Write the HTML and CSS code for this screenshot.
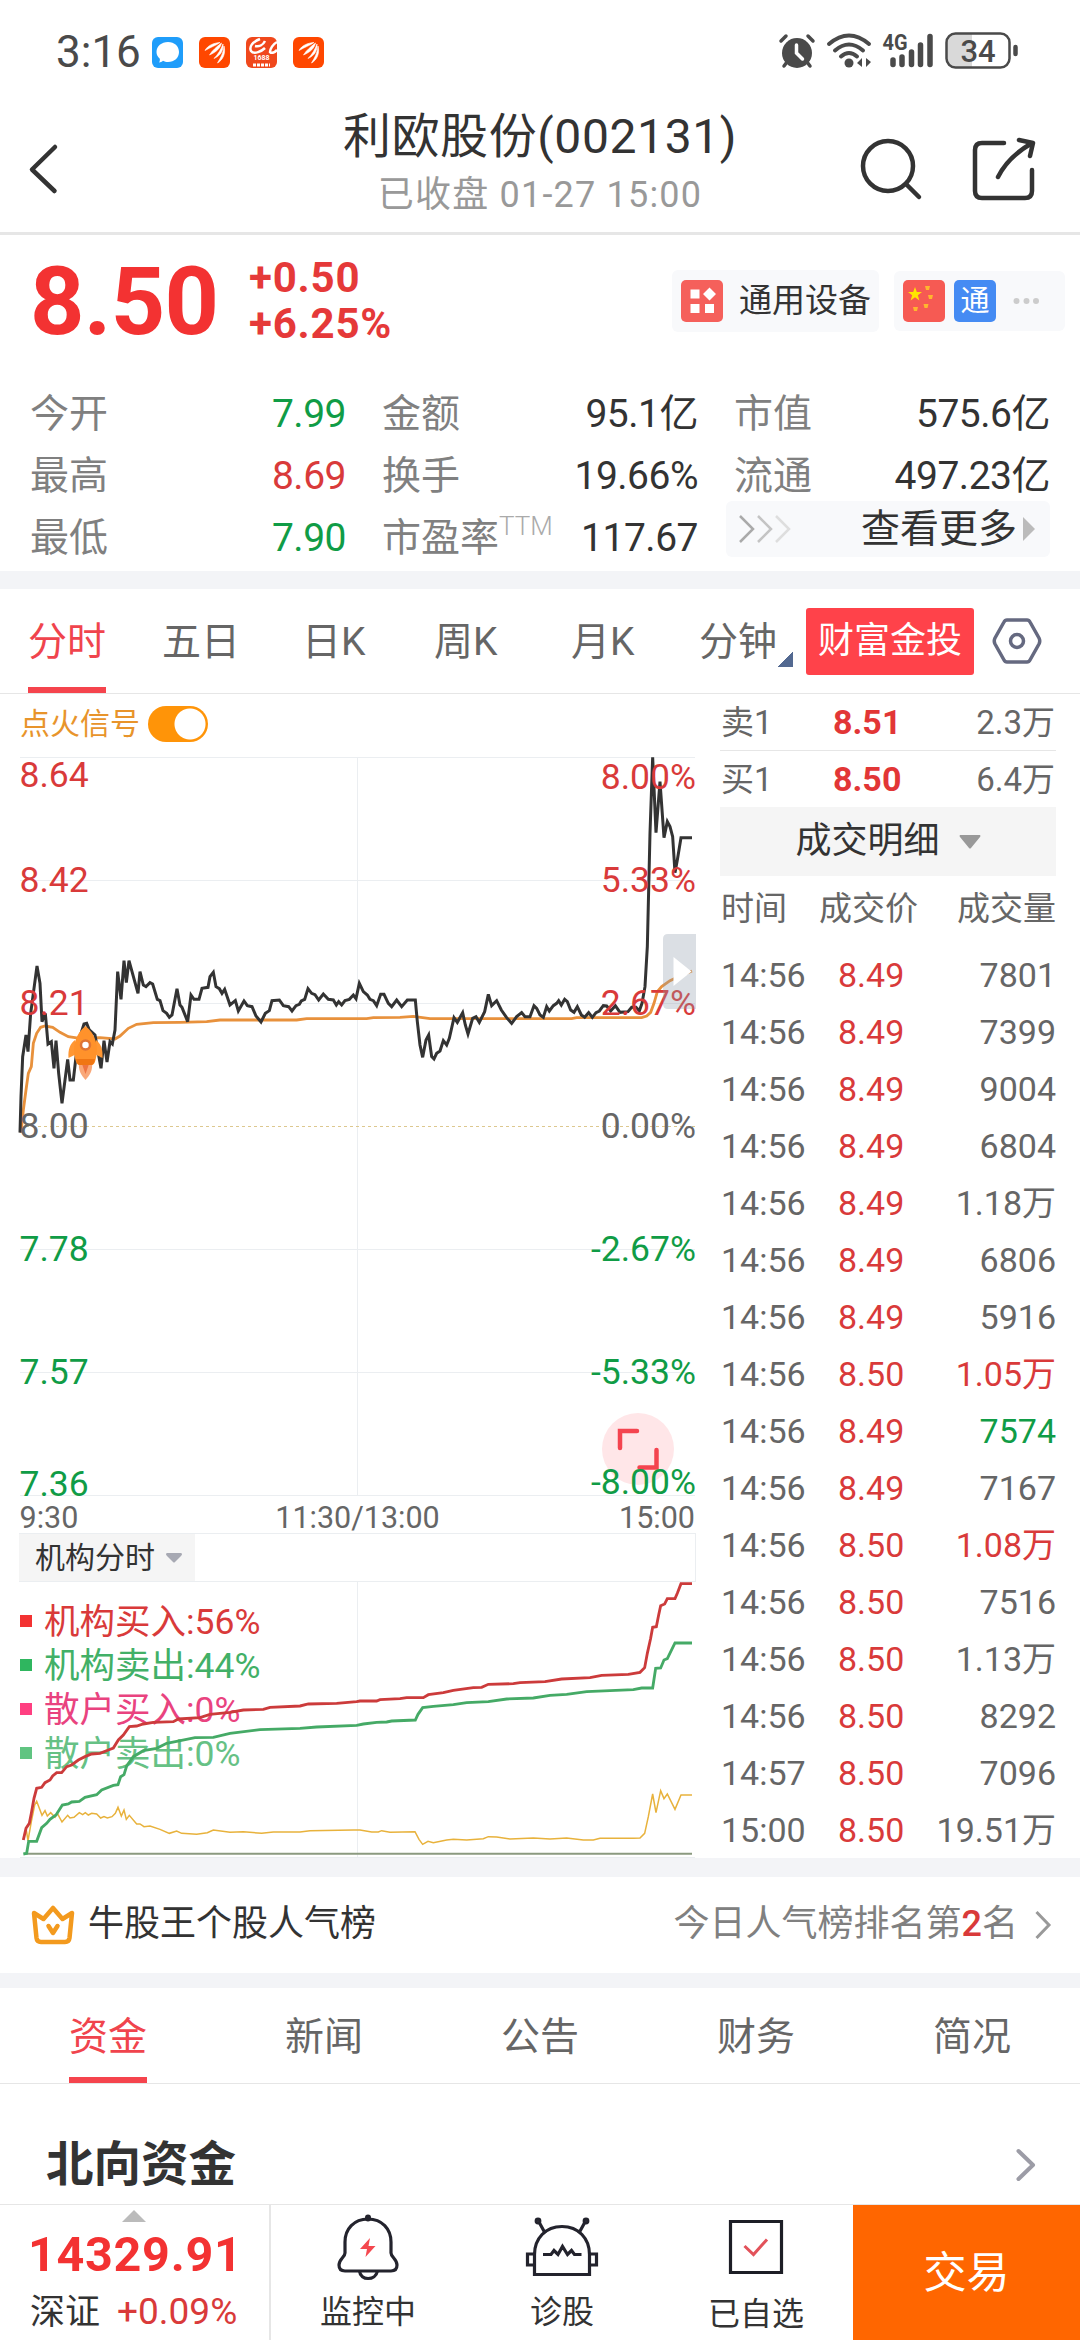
FILE: index.html
```html
<!DOCTYPE html>
<html lang="zh-CN">
<head>
    <meta charset="UTF-8">
    <meta name="viewport" content="width=device-width, initial-scale=1.0">
    <title>利欧股份(002131)</title>
    <link rel="stylesheet" href="styles.css">
</head>
<body>
    <!-- Status bar -->
    <div class="status-bar">
        <span class="clock">3:16</span>
        <div class="app-icons">
            <svg width="31" height="31" viewBox="0 0 31 31">
                <rect width="31" height="31" rx="6" fill="#1f9dfa"/>
                <path d="M16 5c6.500 0 11 4.300 11 10s-4.500 10-11 10c-2 0-3.500-.4-5-1.200-1.200 1-2.500 1.600-4 1.700.8-1 1-2.300.8-3.800C5.800 20 4.500 17.600 4.500 15c0-5.700 5-10 11.500-10z" fill="#fff"/>
            </svg>
            <svg width="31" height="31" viewBox="0 0 31 31">
                <rect width="31" height="31" rx="6" fill="#ff4700"/>
                <path d="M6 13.500C9 8 15 6 21 5.500c-4 3-9 4.500-15 8zM10.500 18c3-5 7-8 12-12-1 5-5 9-12 12zM15 21.500c4-4 7-9 9-14.500.5 6-2 11.500-9 14.500zM18.500 26c3-5 6-10 6.500-17 2 7-1 14-6.500 17z" fill="#fff" stroke="#fff" stroke-width=".6"/>
            </svg>
            <svg width="31" height="31" viewBox="0 0 31 31">
                <rect width="31" height="31" rx="6" fill="#f0481c"/>
                <path d="M14 2C6 5 3 10 5 14c3 4 11 0 14-3M9 9c4 1 8-1 10-5M31 5c-4 2-7 7-7 10 2 2 5 0 7-2" fill="none" stroke="#fff" stroke-width="2.500"/>
                <text x="15.500" y="23" class="app-no">1688</text>
                <path d="M7 28h17" stroke="#fff" stroke-width="3" stroke-dasharray="3 1"/>
            </svg>
            <svg width="31" height="31" viewBox="0 0 31 31">
                <rect width="31" height="31" rx="6" fill="#ff4700"/>
                <path d="M6 13.500C9 8 15 6 21 5.500c-4 3-9 4.500-15 8zM10.500 18c3-5 7-8 12-12-1 5-5 9-12 12zM15 21.500c4-4 7-9 9-14.500.5 6-2 11.500-9 14.500zM18.500 26c3-5 6-10 6.500-17 2 7-1 14-6.500 17z" fill="#fff" stroke="#fff" stroke-width=".6"/>
            </svg>
        </div>
        <svg class="system-icons" width="245" height="40" viewBox="775 30 245 40">
            <!-- alarm -->
            <g stroke="#4a4a4a" stroke-width="3.500" stroke-linecap="round" fill="none">
                <path d="M781 41l5-5M808 36l5 5M787 62l-3 4M807 62l3 4"/>
                <circle cx="797" cy="53" r="15" fill="#4a4a4a" stroke="none"/>
                <path d="M796.500 45v8l6 6" stroke="#fff"/>
            </g>
            <!-- wifi -->
            <g stroke="#4a4a4a" stroke-width="4" stroke-linecap="round" fill="none">
                <path d="M829 44q20-17 40 0M835 50.500q14-12 28 0M841 56.500q8-7 16 0"/>
                <circle cx="849" cy="63" r="4.500" fill="#4a4a4a" stroke="none"/>
                <path d="M857 63l5-5v9zM871 62l-5 5v-9z" fill="#4a4a4a" stroke="none"/>
            </g>
            <!-- signal -->
            <text x="882.500" y="50" class="net-type" textLength="25" lengthAdjust="spacingAndGlyphs">4G</text>
            <path d="M893 60v4.500M902 57v7.500M911.500 52v12.500M920.500 45v19.500M930 36.500v28" stroke="#4a4a4a" stroke-width="5.500" stroke-linecap="round"/>
            <!-- battery -->
            <path d="M956 34h16v33h-16q-9 0-9-9V43q0-9 9-9z" fill="#d9d9d9"/>
            <rect x="946.500" y="33.500" width="63" height="34" rx="9" fill="none" stroke="#4a4a4a" stroke-width="2.500"/>
            <path d="M1015.500 47v7" stroke="#4a4a4a" stroke-width="4.500" stroke-linecap="round"/>
            <text x="978" y="61.500" class="battery">34</text>
        </svg>
    </div>

    <!-- Title bar -->
    <div class="header">
        <svg class="back" width="34" height="54" viewBox="0 0 34 54">
            <path d="M27 5L4 27.500 26.500 49" fill="none" stroke="#333" stroke-width="4.500" stroke-linecap="round" stroke-linejoin="round"/>
        </svg>
        <div class="header-title">
            <div class="name">利欧股份(002131)</div>
            <div class="state">已收盘 01-27 15:00</div>
        </div>
        <svg class="actions" width="180" height="66" viewBox="858 136 180 66">
            <g fill="none" stroke="#333" stroke-width="4.500" stroke-linecap="round" stroke-linejoin="round">
                <circle cx="888" cy="166" r="25"/>
                <path d="M906 184l13 13"/>
                <path d="M1004 143h-22q-7 0-7 7v41q0 7 7 7h43q7 0 7-7v-21"/>
                <path d="M998 177q10-20 34-34M1019 140l14 3-3 13"/>
            </g>
        </svg>
    </div>

    <!-- Quote -->
    <div class="quote">
        <div class="quote-top">
            <div class="price">8.50</div>
            <div class="change">
                <div>+0.50</div>
                <div>+6.25%</div>
            </div>
            <div class="tag industry">
                <svg width="42" height="42" viewBox="0 0 42 42">
                    <rect width="42" height="42" rx="5" fill="#f5605b"/>
                    <path d="M9.500 9.500h9v9h-9zM9.500 24h9v9h-9zM24 24h9v9h-9zM28.500 7.500l6.500 6.500-6.500 6.500L22 14z" fill="#fff"/>
                </svg>
                <span>通用设备</span>
            </div>
            <div class="tag labels">
                <svg width="42" height="42" viewBox="0 0 42 42">
                    <rect width="42" height="42" rx="5" fill="#f65a53"/>
                    <path d="M12 7l1.800 5h5.200l-4.200 3.200 1.600 5.300-4.400-3.200-4.400 3.200 1.600-5.300L5 12h5.200z" fill="#ffe600"/>
                    <path d="M22 6h5l-1 4h-3zM25 15h5l-1 4h-3zM20.500 24h5l-1 4h-3zM10 27h5l-1 4h-3z" fill="#ffb62e"/>
                </svg>
                <span class="tong">通</span>
                <svg width="26" height="8" viewBox="0 0 26 8" fill="#ccc">
                    <circle cx="3.500" cy="4" r="3"/><circle cx="13.500" cy="4" r="3"/><circle cx="23" cy="4" r="3"/>
                </svg>
            </div>
        </div>
        <div class="stats">
            <div class="stat-col">
                <div class="stat"><span>今开</span><b class="green">7.99</b></div>
                <div class="stat"><span>最高</span><b class="red">8.69</b></div>
                <div class="stat"><span>最低</span><b class="green">7.90</b></div>
            </div>
            <div class="stat-col">
                <div class="stat"><span>金额</span><b>95.1亿</b></div>
                <div class="stat"><span>换手</span><b>19.66%</b></div>
                <div class="stat"><span>市盈率<sup>TTM</sup></span><b>117.67</b></div>
            </div>
            <div class="stat-col">
                <div class="stat"><span>市值</span><b>575.6亿</b></div>
                <div class="stat"><span>流通</span><b>497.23亿</b></div>
                <div class="more">
                    <svg width="54" height="28" viewBox="0 0 54 28" fill="none" stroke-width="2.500">
                        <path d="M2 1l13 13L2 27" stroke="#aaa"/>
                        <path d="M20 1l13 13-13 13" stroke="#c4c4c4"/>
                        <path d="M38 1l13 13-13 13" stroke="#dedede"/>
                    </svg>
                    <span>查看更多</span>
                    <svg class="more-arrow" width="12" height="24" viewBox="0 0 12 24"><path d="M0 0l12 12L0 24z" fill="#bbb"/></svg>
                </div>
            </div>
        </div>
    </div>

    <!-- Chart period tabs -->
    <div class="period-tabs">
        <div class="period active">分时</div>
        <div class="period">五日</div>
        <div class="period">日K</div>
        <div class="period">周K</div>
        <div class="period">月K</div>
        <div class="period minute">分钟</div>
        <div class="wealth">财富金投</div>
        <svg class="setting" width="50" height="48" viewBox="0 0 50 48" fill="none" stroke="#656980" stroke-width="3.500" stroke-linejoin="round">
            <path d="M15 3h20q2 0 3 2l9 16q1.500 3 0 6l-9 16q-1 2-3 2H15q-2 0-3-2L3 27q-1.500-3 0-6l9-16q1-2 3-2z"/>
            <circle cx="25" cy="24" r="6.500"/>
        </svg>
    </div>

    <div class="market">
        <div class="charts">
            <div class="signal">
                <span>点火信号</span>
                <div class="switch"></div>
            </div>

            <!-- Price chart -->
            <svg class="price-chart" width="710" height="783" viewBox="0 750 710 783">
                <g stroke="#ebeef1" stroke-width="1">
                    <path d="M20 757.500h675M20 880.500h675M20 1003.500h675M20 1249.500h675M20 1372.500h675M20 1495.500h675M357.500 757v738"/>
                    <path d="M20 1126.500h675" stroke="#ddc88f" stroke-dasharray="3 3"/>
                </g>
                <g transform="translate(0 720) scale(.33333)" fill="none">
                    <polyline stroke="#e8913c" stroke-width="8.500" points="63,1238 70,1170 78,1110 85,1060 94,1040 100,970 110,940 122,922 135,918 158,922 180,937 205,950 240,955 300,953 345,957 360,948 385,925 410,913 460,908 540,907 620,905 660,900 890,900 920,896 1100,896 1120,893 1200,892 1240,889 1290,896 1715,896 1730,893 1925,893 1940,888 1952,877 1962,850 1972,815 1985,800 2010,782 2040,768 2076,753"/>
                    <polyline stroke="#333" stroke-width="9" points="60,1238 63,1130 68,1010 78,945 84,995 92,880 100,820 111,738 120,790 126,905 136,880 144,972 154,965 162,1045 168,962 176,1060 186,1150 203,1018 210,1080 220,1080 228,1010 240,950 252,912 260,910 268,930 285,945 303,1045 312,962 321,1026 330,965 337,972 345,930 353,755 363,838 372,722 379,788 387,722 414,820 420,755 430,795 438,800 450,788 458,792 472,838 480,842 489,872 500,880 508,892 516,885 531,806 540,855 546,862 563,905 573,825 582,838 597,838 606,805 624,802 630,770 640,757 648,800 658,806 666,820 674,808 690,855 706,842 715,873 732,843 742,857 756,860 768,888 783,906 796,880 808,872 816,842 838,840 850,857 866,860 876,873 888,857 898,853 904,843 914,838 924,806 935,820 945,824 956,840 970,822 985,838 1000,840 1009,855 1016,845 1025,855 1035,842 1048,838 1060,825 1068,836 1078,790 1090,815 1102,825 1110,838 1120,842 1130,857 1142,823 1152,823 1165,850 1175,860 1190,840 1205,860 1222,840 1246,840 1252,905 1260,975 1268,1012 1278,960 1286,945 1295,1010 1302,1017 1310,1000 1320,993 1330,962 1340,975 1348,955 1362,893 1372,907 1388,878 1396,915 1404,942 1418,895 1428,890 1438,907 1454,875 1465,823 1475,857 1490,842 1504,870 1520,893 1535,910 1550,890 1565,878 1575,890 1590,890 1602,857 1610,865 1620,885 1630,892 1640,860 1648,873 1660,857 1670,850 1676,842 1684,855 1694,838 1702,845 1712,870 1722,877 1732,860 1744,885 1754,892 1766,878 1777,892 1788,878 1798,873 1810,857 1820,858 1832,873 1846,857 1860,877 1884,875 1895,862 1908,862 1918,873 1926,850 1935,800 1942,680 1950,340 1958,112 1968,338 1980,185 1992,353 2002,305 2010,320 2018,350 2025,458 2032,420 2043,353 2076,353"/>
                </g>
                <!-- rocket marker -->
                <g>
                    <path d="M79 1062h13c1 8-2 13-6.500 18-4.500-5-7.500-10-6.500-18z" fill="#f9a879"/>
                    <path d="M82 1064h7l-3.500 10z" fill="#ee7442"/>
                    <path d="M75 1040c-5 4-7 9-6.500 18l8-4zM96 1040c5 4 7 9 6.500 18l-8-4z" fill="#ff9733"/>
                    <path d="M85.500 1026c10 8 14 21 10 34q-1 5-4 5h-12q-3 0-4-5c-4-13 0-26 10-34z" fill="#ff922b"/>
                    <path d="M76 1059h19q-1 6-4 6h-11q-3 0-4-6z" fill="#f07613"/>
                    <circle cx="85.500" cy="1045" r="4.500" fill="#fff" stroke="#df7434" stroke-width="2.500"/>
                </g>
                <!-- full screen button -->
                <circle cx="638" cy="1449" r="36" fill="#ffe6e8"/>
                <path d="M620 1448v-17h17M656.500 1450v17.500h-17" fill="none" stroke="#f4444f" stroke-width="4.500" stroke-linecap="round"/>
                <g class="axis">
                    <text x="19.500" y="787" class="red">8.64</text>
                    <text x="19.500" y="892" class="red">8.42</text>
                    <text x="19.500" y="1015" class="red">8.21</text>
                    <text x="19.500" y="1138" class="grey">8.00</text>
                    <text x="19.500" y="1261" class="green">7.78</text>
                    <text x="19.500" y="1384" class="green">7.57</text>
                    <text x="19.500" y="1496" class="green">7.36</text>
                </g>
                <g class="axis axis-right">
                    <text x="696" y="789" class="red">8.00%</text>
                    <text x="696" y="892" class="red">5.33%</text>
                    <text x="696" y="1015" class="red">2.67%</text>
                    <text x="696" y="1138" class="grey">0.00%</text>
                    <text x="696" y="1261" class="green">-2.67%</text>
                    <text x="696" y="1384" class="green">-5.33%</text>
                    <text x="696" y="1494" class="green">-8.00%</text>
                </g>
                <path d="M696 934h-28q-5 0-5 5v65q0 5 5 5h28z" fill="#8f9cab" fill-opacity=".32"/>
                <path d="M673.500 957v29l18-14.500z" fill="#fff"/>
                <g class="time-axis">
                    <text x="19.500" y="1528">9:30</text>
                    <text x="357.500" y="1528" text-anchor="middle">11:30/13:00</text>
                    <text x="695" y="1528" text-anchor="end">15:00</text>
                </g>
            </svg>

            <div class="indicator">
                <div class="indicator-name">
                    <span>机构分时</span>
                    <svg width="16" height="10" viewBox="0 0 16 10"><path d="M1 0h14q2 1 0 3L9 9q-1 1-2 0L1 3Q-1 1 1 0z" fill="#a7a9b3"/></svg>
                </div>
            </div>

            <!-- Institution chart -->
            <svg class="flow-chart" width="710" height="276" viewBox="0 1582 710 276">
                <path d="M357.500 1582v275M20 1857.500h675" stroke="#ebeef1"/>
                <g class="legend">
                    <path d="M20 1615h12v12h-12z" fill="#f33232"/>
                    <text x="44" y="1634" fill="#d93a3a">机构买入:56%</text>
                    <path d="M20 1659h12v12h-12z" fill="#2fb65f"/>
                    <text x="44" y="1678" fill="#42b067">机构卖出:44%</text>
                    <path d="M20 1703h12v12h-12z" fill="#ff3f81"/>
                    <text x="44" y="1722" fill="#e9437f">散户买入:0%</text>
                    <path d="M20 1747h12v12h-12z" fill="#60c481"/>
                    <text x="44" y="1766" fill="#66c185">散户卖出:0%</text>
                </g>
                <path d="M24 1853.700h668" stroke="#8b9a7f" stroke-width="2"/>
                <g transform="translate(0 1380) scale(.33333)" fill="none">
                    <polyline stroke="#e8b23c" stroke-width="4.500" points="70,1378 78,1345 84,1382 94,1325 104,1275 110,1264 126,1306 135,1292 142,1308 152,1298 165,1312 172,1300 186,1326 203,1306 210,1314 222,1312 238,1298 248,1304 256,1298 265,1305 275,1300 290,1302 302,1314 312,1310 322,1314 336,1310 346,1300 354,1282 364,1308 372,1290 379,1318 388,1306 410,1332 420,1332 432,1340 450,1338 480,1348 508,1360 530,1353 545,1360 590,1363 622,1358 640,1350 690,1357 730,1355 785,1360 820,1356 900,1356 930,1352 1060,1350 1080,1350 1115,1356 1135,1356 1145,1352 1170,1357 1245,1355 1257,1378 1268,1393 1284,1384 1300,1388 1340,1380 1360,1378 1400,1380 1450,1376 1465,1370 1490,1371 1530,1377 1600,1374 1650,1377 1700,1374 1750,1380 1780,1380 1800,1375 1900,1375 1920,1374 1934,1360 1945,1310 1958,1242 1968,1298 1982,1232 1992,1256 2002,1242 2025,1288 2043,1245 2076,1245"/>
                    <polyline stroke="#45aa66" stroke-width="8.500" points="70,1422 80,1420 86,1384 110,1384 125,1343 140,1330 150,1318 168,1305 187,1275 205,1272 215,1266 238,1264 255,1252 290,1244 305,1230 340,1216 354,1214 362,1190 372,1184 380,1158 400,1130 430,1112 470,1105 500,1090 530,1084 585,1073 640,1072 690,1060 780,1049 900,1045 950,1041 1070,1036 1090,1032 1130,1027 1160,1026 1175,1023 1246,1020 1254,1003 1268,983 1300,979 1360,974 1400,968 1465,965 1520,957 1600,954 1650,946 1700,943 1760,935 1900,929 1925,924 1958,924 1967,865 1982,864 1992,840 2002,836 2025,789 2076,789"/>
                    <polyline stroke="#cc3b3b" stroke-width="8.500" points="70,1380 78,1345 88,1330 94,1300 102,1255 110,1225 125,1222 135,1208 150,1200 158,1188 170,1178 185,1178 200,1160 215,1155 235,1140 255,1130 275,1122 300,1120 325,1110 340,1104 355,1080 370,1065 388,1040 410,1038 430,1032 460,1027 520,1025 535,1017 600,1013 630,1003 690,997 730,990 790,988 810,982 900,978 925,972 1010,970 1070,965 1080,963 1130,963 1140,959 1200,956 1220,953 1270,953 1285,944 1330,938 1360,931 1420,923 1445,922 1465,913 1540,911 1560,908 1635,905 1685,897 1770,893 1805,886 1885,883 1920,877 1934,863 1942,820 1952,775 1958,742 1969,740 1976,705 1982,677 1994,672 2002,656 2025,656 2032,640 2043,611 2076,611"/>
                </g>
            </svg>
        </div>

        <!-- Order book and trades -->
        <div class="orders">
            <div class="order"><span>卖1</span><b>8.51</b><span>2.3万</span></div>
            <div class="order"><span>买1</span><b>8.50</b><span>6.4万</span></div>
            <div class="detail-title">
                <span>成交明细</span>
                <svg width="22" height="14" viewBox="0 0 22 14"><path d="M1 0h20q1 1 0 2L12 13q-1 1-2 0L1 2Q0 1 1 0z" fill="#999"/></svg>
            </div>
            <div class="trade-head"><span>时间</span><span>成交价</span><span>成交量</span></div>
            <div class="trade"><span>14:56</span><span class="red">8.49</span><span>7801</span></div>
            <div class="trade"><span>14:56</span><span class="red">8.49</span><span>7399</span></div>
            <div class="trade"><span>14:56</span><span class="red">8.49</span><span>9004</span></div>
            <div class="trade"><span>14:56</span><span class="red">8.49</span><span>6804</span></div>
            <div class="trade"><span>14:56</span><span class="red">8.49</span><span>1.18万</span></div>
            <div class="trade"><span>14:56</span><span class="red">8.49</span><span>6806</span></div>
            <div class="trade"><span>14:56</span><span class="red">8.49</span><span>5916</span></div>
            <div class="trade"><span>14:56</span><span class="red">8.50</span><span class="red">1.05万</span></div>
            <div class="trade"><span>14:56</span><span class="red">8.49</span><span class="green">7574</span></div>
            <div class="trade"><span>14:56</span><span class="red">8.49</span><span>7167</span></div>
            <div class="trade"><span>14:56</span><span class="red">8.50</span><span class="red">1.08万</span></div>
            <div class="trade"><span>14:56</span><span class="red">8.50</span><span>7516</span></div>
            <div class="trade"><span>14:56</span><span class="red">8.50</span><span>1.13万</span></div>
            <div class="trade"><span>14:56</span><span class="red">8.50</span><span>8292</span></div>
            <div class="trade"><span>14:57</span><span class="red">8.50</span><span>7096</span></div>
            <div class="trade"><span>15:00</span><span class="red">8.50</span><span>19.51万</span></div>
        </div>
    </div>

    <!-- Popularity rank -->
    <div class="rank">
        <svg width="44" height="40" viewBox="0 0 44 40" fill="none" stroke="#f39a1e" stroke-width="4.500" stroke-linejoin="round" stroke-linecap="round">
            <path d="M3 8l9.500 6L22 3l9.500 11L41 8l-2.500 25q-.5 4-4.500 4H10q-4 0-4.500-4z"/>
            <path d="M17.500 21l4.500 7 4.500-7"/>
        </svg>
        <span class="rank-title">牛股王个股人气榜</span>
        <span class="rank-text">今日人气榜排名第<em>2</em>名</span>
        <svg width="18" height="30" viewBox="0 0 18 30"><path d="M2.500 2l12.500 13L2.500 28" fill="none" stroke="#999" stroke-width="3"/></svg>
    </div>

    <div class="info-tabs">
        <div class="info-tab active">资金</div>
        <div class="info-tab">新闻</div>
        <div class="info-tab">公告</div>
        <div class="info-tab">财务</div>
        <div class="info-tab">简况</div>
    </div>

    <div class="north">
        <h2>北向资金</h2>
        <svg width="22" height="36" viewBox="0 0 22 36"><path d="M3.500 4L18 18 3.500 32" fill="none" stroke="#9c9ca6" stroke-width="4" stroke-linecap="round" stroke-linejoin="round"/></svg>
    </div>

    <!-- Bottom bar -->
    <div class="bottom-bar">
        <div class="index">
            <svg width="24" height="12" viewBox="0 0 24 12"><path d="M12 0l12 12H0z" fill="#bbb"/></svg>
            <div class="index-value">14329.91</div>
            <div class="index-name"><span>深证</span><span class="red">+0.09%</span></div>
        </div>
        <div class="tool">
            <svg width="72" height="68" viewBox="332 2214 72 68" fill="none" stroke="#23232d" stroke-width="3.200">
                <path d="M368 2219c-14 0-23 10-23 23v11c0 4-6 6-6 12q0 6 6 6h46q6 0 6-6c0-6-6-8-6-12v-11c0-13-9-23-23-23z"/>
                <path d="M359.500 2271c1 10 16 10 18 0"/>
                <path d="M368 2218.500v-1" stroke-width="6" stroke-linecap="round"/>
                <path d="M370 2238l-10 11h7l-1.500 8 10-11h-7z" fill="#f4484f" stroke="none"/>
            </svg>
            <span>监控中</span>
        </div>
        <div class="tool">
            <svg width="76" height="68" viewBox="524 2214 76 68" fill="none" stroke="#23232d" stroke-width="3.200">
                <path d="M534.500 2274.500v-20c0-16 11-28 27.500-28s27.500 12 27.500 28v20z"/>
                <path d="M534 2254h-6.500v11h6.500M590 2254h6.500v11H590M545 2233l-6-11M579 2233l6-11"/>
                <circle cx="538" cy="2221" r="1.800"/><circle cx="586" cy="2221" r="1.800"/>
                <path d="M543 2254.500h8l3-4 4 4 4.500-8 5 8 4-4 3 4h7"/>
            </svg>
            <span>诊股</span>
        </div>
        <div class="tool tool-added">
            <svg width="72" height="68" viewBox="720 2214 72 68" fill="none">
                <path d="M730.500 2221.500h51v51h-51z" stroke="#1d1e26" stroke-width="3.200"/>
                <path d="M744.500 2246l9 8.500 13.500-15" stroke="#e2525a" stroke-width="3"/>
            </svg>
            <span>已自选</span>
        </div>
        <div class="trade-button">交易</div>
    </div>
</body>
</html>
```
FILE: styles.css
```css
body {
    margin: 0;
    width: 1080px;
    height: 2340px;
    overflow: hidden;
    background-color: #fff;
    color: #333;
    font-family: Roboto, "Noto Sans CJK SC", sans-serif;
    line-height: 1.2;
}
div, span {
    box-sizing: border-box;
    white-space: nowrap;
}
svg {
    display: block;
    flex: none;
    overflow: visible;
}
.red {
    color: #d93a3a;
    fill: #d93a3a;
}
.green {
    color: #109c46;
    fill: #109c46;
}
.grey {
    fill: #666;
}

/* status bar */
.status-bar {
    display: flex;
    align-items: center;
    height: 104px;
    padding: 0 60px 0 56px;
}
.clock {
    width: 96px;
    font-size: 44px;
    line-height: 44px;
    color: #4a4a4a;
}
.app-icons {
    display: flex;
    gap: 16px;
    flex: 1;
}
.app-no {
    font-size: 7px;
    font-weight: bold;
    fill: #fff;
    text-anchor: middle;
}
.system-icons {
    margin-top: -4px;
}
.net-type {
    font-size: 22px;
    font-weight: bold;
    fill: #4a4a4a;
}
.battery {
    font-size: 31px;
    font-weight: 500;
    fill: #4a4a4a;
    text-anchor: middle;
}

/* header */
.header {
    display: grid;
    grid-template-columns: 340px 1fr 340px;
    height: 131px;
    border-bottom: 3px solid #e6e6e6;
}
.back {
    margin: 38px 0 0 28px;
}
.header-title {
    text-align: center;
}
.name {
    margin-top: 3px;
    font-size: 48px;
    line-height: 60px;
    letter-spacing: 0.6px;
}
.state {
    margin-top: 5px;
    font-size: 36px;
    line-height: 46px;
    letter-spacing: 1.2px;
    color: #999;
}
.actions {
    margin: 32px 0 0 118px;
}

/* quote */
.quote {
    height: 354px;
    border-bottom: 18px solid #f3f4f7;
}
.quote-top {
    display: flex;
    align-items: center;
    height: 132px;
    padding: 0 15px 0 30px;
}
.price {
    width: 219px;
    font-size: 95px;
    line-height: 95px;
    font-weight: bold;
    letter-spacing: -0.7px;
    color: #f33232;
}
.change {
    flex: 1;
    font-size: 42px;
    line-height: 46px;
    font-weight: bold;
    letter-spacing: 0.8px;
    color: #e53939;
}
.tag {
    display: flex;
    align-items: center;
    height: 62px;
    border-radius: 6px;
    background-color: #f8f9fb;
}
.industry {
    width: 207px;
    padding-left: 9px;
    gap: 16px;
    font-size: 33px;
}
.labels {
    width: 171px;
    height: 60px;
    margin-left: 15px;
    padding-left: 9px;
    gap: 9px;
}
.tong {
    width: 42px;
    height: 42px;
    margin-right: 8px;
    border-radius: 5px;
    background-color: #458bf3;
    color: #fff;
    font-size: 29px;
    line-height: 42px;
    text-align: center;
}
.stats {
    display: grid;
    grid-template-columns: 316px 316px 316px;
    column-gap: 36px;
    padding: 16px 30px 0 30px;
}
.stat {
    display: flex;
    justify-content: space-between;
    height: 62px;
    font-size: 39px;
    line-height: 62px;
    color: #808080;
}
.stat b {
    font-weight: normal;
    letter-spacing: -0.5px;
    color: #333;
}
.stat b.red {
    color: #d93a3a;
}
.stat b.green {
    color: #109c46;
}
.stat sup {
    font-size: 26px;
    line-height: 0;
    vertical-align: 16px;
    font-weight: 300;
    color: #aaa;
}
.more {
    display: flex;
    align-items: center;
    height: 56px;
    margin: -6px 0 0 -8px;
    padding: 0 15px 0 12px;
    border-radius: 6px;
    background-color: #f8f9fb;
    font-size: 39px;
    line-height: 56px;
}
.more span {
    margin-left: auto;
}
.more-arrow {
    margin-left: 6px;
}

/* period tabs */
.period-tabs {
    display: flex;
    align-items: center;
    height: 105px;
    padding-left: 28px;
    border-bottom: 1px solid #e6e6e6;
}
.period {
    height: 104px;
    width: 137px;
    font-size: 39px;
    line-height: 106px;
    color: #666;
}
.period:nth-child(2) {
    width: 140px;
}
.period:nth-child(3) {
    width: 132px;
}
.period.active {
    width: 78px;
    margin-right: 56px;
    border-bottom: 6px solid #f5444d;
    color: #f0444d;
}
.minute {
    width: 94px;
    margin-right: 13px;
    background: linear-gradient(135deg, transparent 50%, #536991 50%) 79px 63px / 15px 15px no-repeat;
}
.period:nth-child(5) {
    width: 128px;
}
.wealth {
    width: 168px;
    height: 67px;
    border-radius: 3px;
    background-color: #ff424a;
    color: #fff;
    font-size: 36px;
    line-height: 67px;
    text-align: center;
}
.setting {
    margin-left: 18px;
}

/* charts and trades */
.market {
    display: flex;
    height: 1183px;
    border-bottom: 19px solid #f3f4f7;
}
.charts {
    width: 720px;
}
.signal {
    display: flex;
    align-items: center;
    height: 56px;
    padding: 4px 0 0 20px;
    font-size: 30px;
    line-height: 56px;
    color: #e8942b;
}
.switch {
    width: 60px;
    height: 36px;
    margin-left: 8px;
    border-radius: 18px;
    background: radial-gradient(circle at 42px 18px, #fff 15px, #ff9408 16px);
}
.indicator {
    width: 677px;
    height: 49px;
    margin-left: 19px;
    border: 1px solid #ebeef1;
    border-left: 0;
}
.indicator-name {
    display: flex;
    align-items: center;
    gap: 11px;
    width: 176px;
    height: 47px;
    padding-left: 16px;
    background-color: #f5f5f5;
    font-size: 30px;
}
.axis {
    font-size: 35.5px;
}
.axis-right {
    text-anchor: end;
}
.time-axis {
    font-size: 30.5px;
    fill: #666;
}
.legend {
    font-size: 35.5px;
}
.orders {
    width: 336px;
    font-size: 34px;
    color: #666;
}
.order {
    display: flex;
    justify-content: space-between;
    height: 56px;
    padding: 0 1px;
    font-size: 33px;
    line-height: 57px;
}
.order:first-child {
    height: 57px;
    border-bottom: 1px solid #e6e6e6;
}
.order b {
    flex: 1;
    padding-left: 62px;
    font-size: 34px;
    color: #e23636;
}
.order span:first-child {
    width: 50px;
}
.detail-title {
    display: flex;
    align-items: center;
    justify-content: center;
    gap: 19px;
    height: 69px;
    background-color: #f5f5f5;
    color: #333;
    font-size: 36px;
}
.trade-head {
    display: grid;
    grid-template-columns: 98px 1fr auto;
    height: 71px;
    padding: 4px 0 0 1px;
    font-size: 33px;
    line-height: 57px;
}
.trade {
    display: grid;
    grid-template-columns: 117px 80px 1fr;
    height: 57px;
    padding-left: 1px;
    line-height: 57px;
}
.trade span:last-child {
    text-align: right;
}

/* rank */
.rank {
    display: flex;
    align-items: center;
    height: 111px;
    padding: 0 28px 0 31px;
    border-bottom: 15px solid #f3f4f7;
    font-size: 36px;
    box-sizing: border-box;
}
.rank-title {
    margin-left: 13px;
}
.rank-text {
    margin: 0 16px 0 auto;
    color: #808080;
}
.rank-text em {
    font-style: normal;
    font-weight: 500;
    color: #d93a3a;
}

/* info tabs */
.info-tabs {
    display: flex;
    height: 96px;
    border-bottom: 1px solid #e6e6e6;
}
.info-tab {
    display: flex;
    justify-content: center;
    flex: 1;
    font-size: 39px;
    line-height: 98px;
    color: #666;
}
.info-tab.active {
    color: #f0444d;
    background: linear-gradient(#f5444d, #f5444d) center bottom / 78px 6px no-repeat;
}
.north {
    display: flex;
    align-items: center;
    justify-content: space-between;
    height: 120px;
    padding: 42px 43px 0 46px;
    box-sizing: border-box;
}
.north h2 {
    margin: 0;
    font-size: 47.5px;
    line-height: 60px;
}

/* bottom bar */
.bottom-bar {
    display: flex;
    height: 136px;
    border-top: 1px solid #e6e6e6;
    box-sizing: border-box;
}
.index {
    width: 271px;
    padding: 5px 0 0 28px;
    border-right: 2px solid #e6e6e6;
}
.index svg {
    margin-left: 94px;
}
.index-value {
    margin-top: 4px;
    font-size: 48.5px;
    line-height: 57px;
    font-weight: bold;
    letter-spacing: 0.7px;
    color: #f33232;
}
.index-name {
    display: flex;
    align-items: baseline;
    gap: 17px;
    padding-left: 2px;
    font-size: 35px;
    line-height: 58px;
}
.index-name .red {
    font-size: 37px;
}
.tool {
    display: flex;
    flex-direction: column;
    align-items: center;
    width: 194px;
    padding-top: 9px;
    font-size: 32px;
    line-height: 60px;
}
.tool-added span {
    padding-top: 2px;
}
.trade-button {
    flex: 1;
    background-color: #f60;
    color: #fff;
    font-size: 43px;
    line-height: 136px;
    text-align: center;
}
```
